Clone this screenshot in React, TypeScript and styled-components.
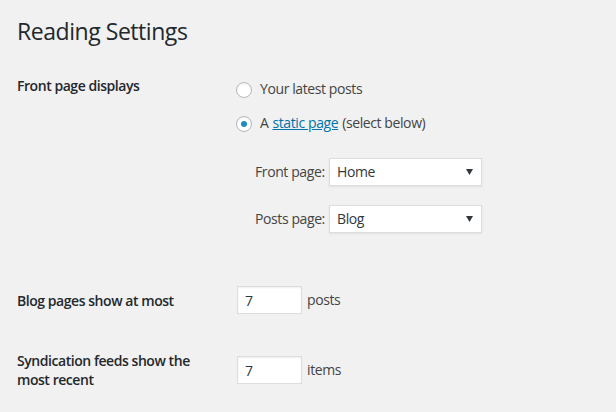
import React from "react";
import styled, { createGlobalStyle } from "styled-components";

const GlobalStyle = createGlobalStyle`
  html, body {
    margin: 0;
    padding: 0;
    background: #f1f1f1;
  }
  body {
    font-family: "Open Sans", "Noto Sans", "Liberation Sans", sans-serif;
    font-size: 14px;
    line-height: 1.3;
    letter-spacing: -0.4px;
    color: #444;
  }
`;

const Wrap = styled.div`
  padding: 0 17px;
  width: 616px;
  height: 412px;
  box-sizing: border-box;
  overflow: hidden;
`;

const Title = styled.h1`
  margin: 0;
  padding-top: 16px;
  font-size: 23px;
  line-height: 30px;
  font-weight: 400;
  letter-spacing: -0.45px;
  color: #23282d;
`;

const Row = styled.div<{ $gap: number; $center?: boolean }>`
  display: grid;
  grid-template-columns: 220px 1fr;
  align-items: ${(p) => (p.$center ? "center" : "start")};
  margin-top: ${(p) => p.$gap}px;
`;

const Th = styled.div`
  width: 200px;
  font-weight: 600;
  line-height: 19px;
  letter-spacing: -0.45px;
  color: #23282d;
`;

const Td = styled.div<{ $pt?: number }>`
  padding-top: ${(p) => p.$pt ?? 0}px;
`;

const Fieldset = styled.div`
  display: flex;
  flex-direction: column;
`;

const RadioLabel = styled.label`
  display: flex;
  align-items: center;
  height: 18px;
  margin-bottom: 16px;
  white-space: nowrap;
`;

const Radio = styled.span<{ $checked?: boolean }>`
  width: 16px;
  height: 16px;
  margin: 1px 8px 0 -1px;
  box-sizing: border-box;
  border: 1px solid #b4b9be;
  border-radius: 50%;
  background: #fff;
  box-shadow: inset 0 1px 2px rgba(0, 0, 0, 0.07);
  display: flex;
  align-items: center;
  justify-content: center;

  &::before {
    content: "";
    display: ${(p) => (p.$checked ? "block" : "none")};
    width: 6px;
    height: 6px;
    border-radius: 50%;
    background: #1e8cbe;
  }
`;

const Link = styled.a`
  color: #0073aa;
  text-decoration: underline;
  margin: 0 4px;
`;

const SubList = styled.div`
  display: flex;
  flex-direction: column;
  gap: 19px;
  margin-top: 10px;
  padding-left: 18px;
`;

const SubItem = styled.div`
  display: flex;
  align-items: center;
`;

const SubLabel = styled.span`
  width: 74px;
  white-space: nowrap;
`;

const SelectBox = styled.div`
  display: flex;
  align-items: center;
  justify-content: space-between;
  width: 153px;
  height: 28px;
  box-sizing: border-box;
  padding: 0 8px 0 7px;
  border: 1px solid #ddd;
  background: #fff;
  box-shadow: 0 1px 2px rgba(0, 0, 0, 0.07);
  color: #32373c;
`;

const Caret = styled.svg`
  width: 7px;
  height: 6px;
  fill: #32373c;
`;

const Inline = styled.div`
  display: flex;
  align-items: center;
  gap: 5px;
`;

const NumberInput = styled.input`
  width: 65px;
  height: 28px;
  box-sizing: border-box;
  margin: 0;
  padding: 0 7px;
  border: 1px solid #ddd;
  background: #fff;
  box-shadow: inset 0 1px 2px rgba(0, 0, 0, 0.07);
  font: inherit;
  letter-spacing: inherit;
  color: #32373c;
  outline: none;
`;

const Select: React.FC<{ value: string }> = ({ value }) => (
  <SelectBox>
    <span>{value}</span>
    <Caret viewBox="0 0 7 6">
      <path d="M0 0h7L3.5 6z" />
    </Caret>
  </SelectBox>
);

export default function App() {
  return (
    <>
      <GlobalStyle />
      <Wrap>
        <Title>Reading Settings</Title>

        <Row $gap={30}>
          <Th>Front page displays</Th>
          <Td $pt={4}>
            <Fieldset>
              <RadioLabel>
                <Radio />
                Your latest posts
              </RadioLabel>
              <RadioLabel>
                <Radio $checked />
                A<Link href="#">static page</Link>(select below)
              </RadioLabel>
              <SubList>
                <SubItem>
                  <SubLabel>Front page:</SubLabel>
                  <Select value="Home" />
                </SubItem>
                <SubItem>
                  <SubLabel>Posts page:</SubLabel>
                  <Select value="Blog" />
                </SubItem>
              </SubList>
            </Fieldset>
          </Td>
        </Row>

        <Row $gap={53} $center>
          <Th>Blog pages show at most</Th>
          <Inline>
            <NumberInput type="text" defaultValue="7" readOnly />
            posts
          </Inline>
        </Row>

        <Row $gap={37} $center>
          <Th>Syndication feeds show the most recent</Th>
          <Inline>
            <NumberInput type="text" defaultValue="7" readOnly />
            items
          </Inline>
        </Row>
      </Wrap>
    </>
  );
}
